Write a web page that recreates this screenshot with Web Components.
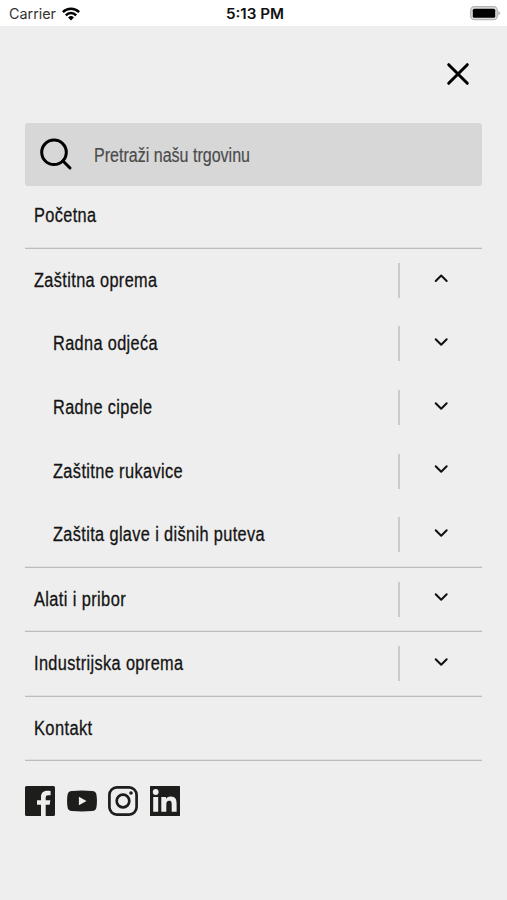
<!DOCTYPE html>
<html lang="hr">
<head>
<meta charset="utf-8">
<title>Izbornik</title>
<style>
html,body{margin:0;height:100%;background:#eee}
body{font-family:"Liberation Sans",Arial,sans-serif;color:#141414;overflow:hidden}
</style>
</head>
<body>
<mobile-menu></mobile-menu>
<script>
const define = (name, html, setup) => customElements.define(name, class extends HTMLElement {
  connectedCallback() {
    if (this.shadowRoot) return;
    this.attachShadow({mode: 'open'}).innerHTML = html;
    if (setup) setup(this, this.shadowRoot);
  }
});

// A condensed line of text, scaled horizontally to the width given in pixels.
define('narrow-text', `<style>
:host{display:block;height:24px;line-height:24px;white-space:nowrap}
span{display:inline-block;transform-origin:0 50%;letter-spacing:var(--spacing,0);-webkit-text-stroke:var(--weight,0) currentColor}
</style><span></span>`, (el, root) => {
  const s = root.querySelector('span');
  s.textContent = el.getAttribute('text');
  const w = +el.getAttribute('width');
  el.style.width = w + 'px';
  s.style.transform = `scaleX(${w / s.getBoundingClientRect().width})`;
});

define('status-bar', `<style>
:host{display:grid;grid-template-columns:1fr auto 1fr;align-items:center;height:26px;background:#fff;box-sizing:border-box;padding:1px 7px 0 9px;font-family:Inter,sans-serif;font-size:14.3px;line-height:24px}
.l{display:flex;align-items:center;gap:6px;color:#333}
.t{font-weight:600;font-size:14px;color:#111}
.b{justify-self:end}
svg{display:block}
</style>
<div class="l"><narrow-text text="Carrier" width="47"></narrow-text>
<svg width="18" height="14" viewBox="0 0 18 14" fill="none" stroke="#000" stroke-width="2.5"><path d="M.9 5.1a11.5 11.5 0 0 1 16.2 0"/><path d="M3.8 8.3a7.3 7.3 0 0 1 10.4 0"/><path d="M9 13.4 6.1 10.5a4.1 4.1 0 0 1 5.8 0z" fill="#000" stroke="none"/></svg></div>
<narrow-text class="t" text="5:13 PM" width="58"></narrow-text>
<svg class="b" width="30" height="15" viewBox="0 0 30 15"><rect x=".7" y=".7" width="26.6" height="13" rx="3.8" fill="#ddd" stroke="#b5b5b5" stroke-width="1.3"/><rect x="2.8" y="2.7" width="22.4" height="9" rx="1.5"/><path d="M28.4 5v4.4q1.5-.6 1.5-2.2T28.4 5z" fill="#aaa"/></svg>`);

define('search-field', `<style>
:host{display:flex;align-items:center;box-sizing:border-box;height:63px;border-radius:3px;background:#d7d7d7;padding:1px 0 0 15px;gap:20px;color:#4b4b4b;font-size:20px;--weight:.2px}
</style>
<svg width="34" height="34" viewBox="0 0 34 34" fill="none" stroke="#000" stroke-width="3" stroke-linecap="round"><circle cx="14" cy="14.3" r="12.3"/><path d="m23 23 7 7"/></svg>
<narrow-text text="Pretraži našu trgovinu" width="156"></narrow-text>`);

define('menu-row', `<style>
:host{display:flex;align-items:center;justify-content:space-between;height:63.6px;box-sizing:border-box;padding-left:9px;font-size:19.5px;--spacing:.45px;--weight:.3px}
:host([sub]){padding-left:27.5px}
narrow-text{margin-top:-1px}
.a{display:flex;align-items:center;width:84.5px;height:35px;box-sizing:border-box;border-left:2px solid #cbcbcb;padding-left:34px}
svg{display:block;margin-top:-4px}
</style><narrow-text></narrow-text>`, (el, root) => {
  const old = root.querySelector('narrow-text');
  const t = document.createElement('narrow-text');
  t.setAttribute('text', el.getAttribute('text'));
  t.setAttribute('width', el.getAttribute('width'));
  old.replaceWith(t);
  const dir = el.getAttribute('arrow');
  if (dir) t.insertAdjacentHTML('afterend', `<div class="a"><svg width="15" height="10" viewBox="0 0 15 10" fill="none" stroke="#111" stroke-width="2" stroke-linecap="round" stroke-linejoin="round"><path d="${dir === 'up' ? 'M1.7 8 7.2 2.5 12.7 8' : 'M1.7 2.2 7.2 7.7 12.7 2.2'}"/></svg></div>`);
});

define('menu-group', `<style>:host{display:block;border-bottom:1px solid #bcbcbc;box-shadow:0 -1px #e0e0e0 inset}</style><slot></slot>`);

define('social-links', `<style>:host{display:flex;align-items:center;gap:11.5px;color:#1d1d1b}svg{display:block}</style>
<svg width="30" height="30" viewBox="0 0 30 30"><path fill="currentColor" d="M1.500 0h27A1.500 1.500 0 0 1 30 1.500v27a1.500 1.500 0 0 1-1.500 1.500h-7.800V18.800h4l.6-4.600h-4.600v-2.400c0-1.700.7-2.500 2.400-2.500h2.500V5c-.8-.2-2-.3-3.500-.3-3.700 0-6.100 2.200-6.100 6.100v3.400H12v4.600h4V30H1.500A1.500 1.500 0 0 1 0 28.500v-27A1.500 1.500 0 0 1 1.500 0z"/></svg>
<svg width="30" height="30" viewBox="0 0 30 30"><path fill="currentColor" fill-rule="evenodd" d="M5 4.900q10-.8 20 0 4 .2 4.500 4 .9 6 0 12.200-.5 3.800-4.500 4-10 .8-20 0-4-.2-4.500-4-.9-6.100 0-12.200.5-3.800 4.500-4zM11.900 10.700v8.600l7.600-4.300z"/></svg>
<svg width="30" height="30" viewBox="0 0 30 30" fill="none" stroke="currentColor" stroke-width="2.700"><rect x="1.400" y="1.400" width="27.200" height="27.200" rx="7.500"/><circle cx="15" cy="15" r="6.300"/><circle cx="23" cy="7" r="1.800" fill="currentColor" stroke="none"/></svg>
<svg width="30" height="30" viewBox="0 0 30 30"><rect width="30" height="30" rx=".5" fill="currentColor"/><g fill="#eee"><circle cx="5.700" cy="6" r="2.900"/><path d="M3.200 11h5v14.800h-5zM11.300 11H16v2c.6-1.100 2.100-2.400 4.700-2.400 4.900 0 5.900 3.100 5.900 7.100v8.100h-4.900v-7.200c0-1.700 0-3.900-2.500-3.900s-2.900 1.900-2.900 3.800v7.300h-5z"/></g></svg>`);

define('mobile-menu', `<style>
:host{display:flex;flex-direction:column;height:100vh}
header{display:flex;justify-content:flex-end;align-items:center;height:97px;box-sizing:border-box;padding:0 37px 1px 0}
main{display:flex;flex-direction:column;padding:0 25px}
nav{margin-top:-2px}
social-links{margin-top:25px}
</style>
<status-bar></status-bar>
<header><svg width="24" height="24" viewBox="0 0 24 24" fill="none" stroke="#000" stroke-width="3" stroke-linecap="round"><path d="m2.700 2.700 18.600 18.600m0-18.600L2.700 21.300"/></svg></header>
<main>
<search-field></search-field>
<nav>
<menu-group><menu-row text="Početna" width="62.500"></menu-row></menu-group>
<menu-group>
<menu-row text="Zaštitna oprema" width="123.500" arrow="up"></menu-row>
<menu-row sub text="Radna odjeća" width="105" arrow="down"></menu-row>
<menu-row sub text="Radne cipele" width="99.500" arrow="down"></menu-row>
<menu-row sub text="Zaštitne rukavice" width="130" arrow="down"></menu-row>
<menu-row sub text="Zaštita glave i dišnih puteva" width="212" arrow="down"></menu-row>
</menu-group>
<menu-group><menu-row text="Alati i pribor" width="92" arrow="down"></menu-row></menu-group>
<menu-group><menu-row text="Industrijska oprema" width="149.500" arrow="down"></menu-row></menu-group>
<menu-group><menu-row text="Kontakt" width="58.500"></menu-row></menu-group>
</nav>
<social-links></social-links>
</main>`);
</script>
</body>
</html>
